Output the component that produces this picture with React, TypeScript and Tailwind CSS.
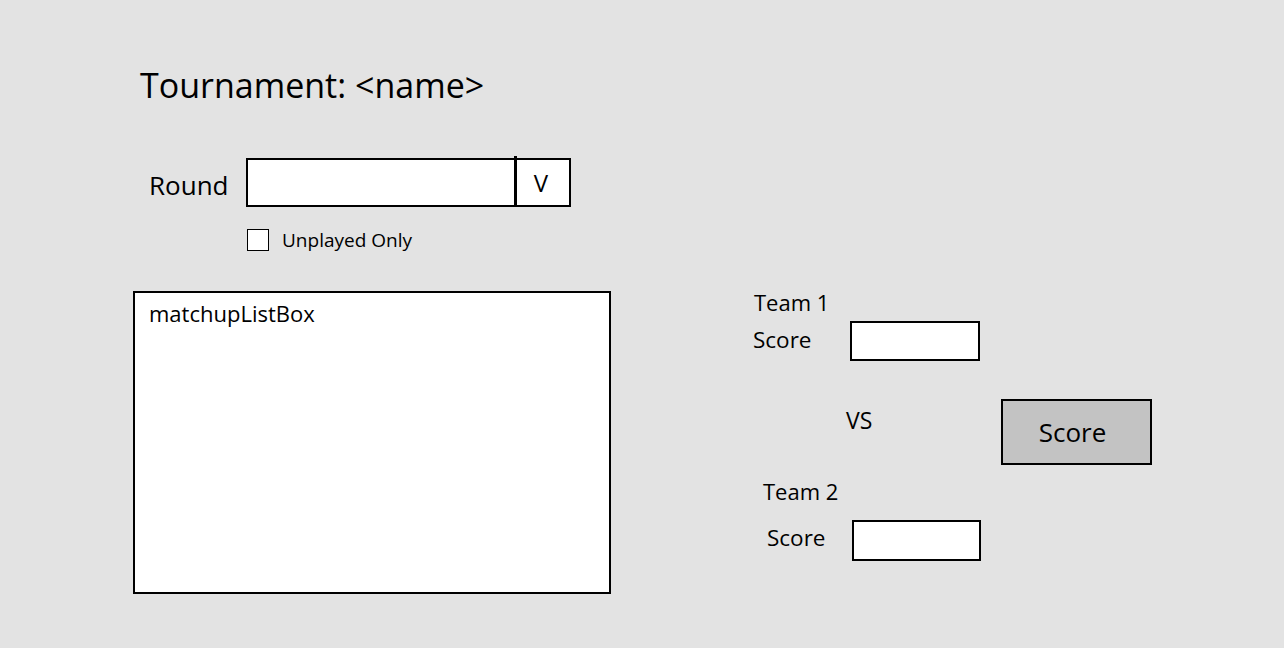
export default function App() {
  return (
    <div
      className="w-[1284px] h-[648px] bg-[#e3e3e3] text-black overflow-hidden"
      style={{ fontFamily: '"Open Sans", "Noto Sans", sans-serif' }}
    >
      <div className="pt-[68px] pl-[140px] text-[34px] leading-none h-[101px]">Tournament: &lt;name&gt;</div>

      <div className="mt-[57px] flex items-center h-[49px]">
        <div className="ml-[149px] mt-[4px] w-[97px] text-[26px] leading-none">Round</div>
        <div className="flex w-[325px] h-[49px] border-2 border-black bg-white">
          <div className="flex-1" />
          <div className="w-[3px] h-[49px] -mt-[4px] bg-black" />
          <div className="w-[52px] flex items-center justify-center text-[24px] leading-none pr-[4px]">V</div>
        </div>
      </div>

      <div className="mt-[22px] ml-[247px] flex items-center h-[22px]">
        <div className="w-[22px] h-[22px] border-[1.5px] border-black bg-white" />
        <div className="ml-[13px] text-[19px] leading-none">Unplayed Only</div>
      </div>

      <div className="mt-[40px] flex">
        <div className="ml-[133px] w-[478px] h-[303px] border-2 border-black bg-white pl-[14px] pt-[9px]">
          <div className="text-[22px] leading-none">matchupListBox</div>
        </div>

        <div className="ml-[142px] flex flex-col">
          <div className="ml-[1px] text-[22px] leading-none h-[21px]">Team 1</div>
          <div className="mt-[9px] flex items-center">
            <div className="w-[97px] text-[22.5px] leading-none -mt-[1px]">Score</div>
            <div className="w-[130px] h-[40px] border-2 border-black bg-white" />
          </div>
          <div className="mt-[38px] flex items-start">
            <div className="ml-[93px] mt-[10px] w-[155px] text-[23px] leading-none">VS</div>
            <div className="w-[151px] h-[66px] border-2 border-black bg-[#c3c3c3] flex items-center justify-center text-[26px] leading-none pr-[8px]">
              Score
            </div>
          </div>
          <div className="mt-[15px] ml-[10px] text-[22px] leading-none h-[21px]">Team 2</div>
          <div className="mt-[19px] flex items-center">
            <div className="ml-[14px] w-[85px] text-[22.5px] leading-none -mt-[4px]">Score</div>
            <div className="w-[129px] h-[41px] border-2 border-black bg-white" />
          </div>
        </div>
      </div>
    </div>
  );
}
